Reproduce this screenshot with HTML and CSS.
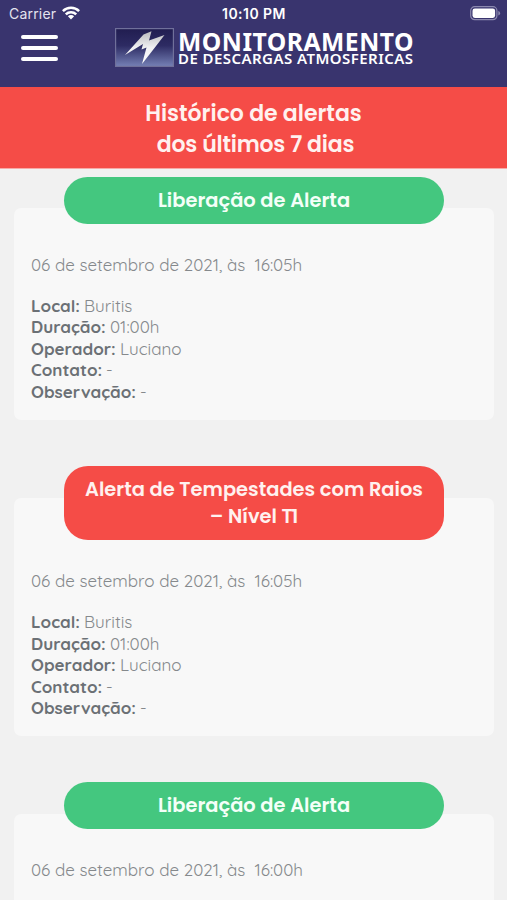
FILE: index.html
```
<!DOCTYPE html>
<html lang="pt-BR">
<head>
<meta charset="utf-8">
<meta name="viewport" content="width=device-width">
<title>Monitoramento de Descargas Atmosféricas</title>
<link rel="stylesheet" href="styles.css">
</head>
<body>
<header class="header">
  <div class="status">
    <div class="carrier"><span>Carrier</span>
      <svg class="wifi" viewBox="0 0 18 14" width="18" height="14"><g fill="none" stroke="#fff" stroke-width="2.5"><path d="M.9 5.1a11.5 11.5 0 0 1 16.2 0"/><path d="M3.8 8.3a7.4 7.4 0 0 1 10.4 0"/></g><path d="M5.9 10.3a4.4 4.4 0 0 1 6.2 0L9 13.6z" fill="#fff"/></svg>
    </div>
    <time class="clock">10:10 PM</time>
    <svg class="battery" viewBox="0 0 31 15" width="31" height="15"><rect x=".7" y=".7" width="26.2" height="13" rx="4" fill="none" stroke="#8c89af" stroke-width="1.2"/><rect x="2.5" y="2.5" width="22.6" height="9.4" rx="2.3" fill="#fff"/><path d="M28.3 5v4.5q1.8-.6 1.8-2.25T28.3 5z" fill="#8c89af"/></svg>
  </div>
  <div class="bar">
    <button class="menu" aria-label="Menu"><i></i><i></i><i></i></button>
    <div class="brand">
      <svg class="logo" viewBox="0 0 59 39" width="59" height="39">
        <defs>
          <linearGradient id="sky" x2="0" y2="1"><stop stop-color="#211d50"/><stop offset=".45" stop-color="#2d2b63"/><stop offset="1" stop-color="#7580b5"/></linearGradient>
          <linearGradient id="bolt" x2="0" y2="1"><stop stop-color="#b9b9bd"/><stop offset=".5" stop-color="#f0f0f2"/><stop offset="1" stop-color="#fff"/></linearGradient>
        </defs>
        <rect x=".6" y=".6" width="57.8" height="37.8" fill="url(#sky)" stroke="#70709a" stroke-width="1.2"/>
        <path d="M10 27L28.5 6.5 36.5 3.2 34 12.5 49.5 7 39.5 20 27 36 31.5 19.5 26.5 21.5 28 16z" fill="url(#bolt)"/>
      </svg>
      <div class="name"><span class="name-top">MONITORAMENTO</span><span class="name-sub">DE DESCARGAS ATMOSFERICAS</span></div>
    </div>
  </div>
</header>
<h1 class="title"><span class="t1">Histórico de alertas</span><br><span class="t2">dos últimos 7 dias</span></h1>
<main class="list">
  <article class="card">
    <h2 class="pill"><span class="p1">Liberação de Alerta</span></h2>
    <p class="date">06 de setembro de 2021, às&nbsp; 16:05h</p>
    <dl class="info">
      <div><dt class="local">Local:</dt><dd>Buritis</dd></div>
      <div><dt class="dur">Duração:</dt><dd>01:00h</dd></div>
      <div><dt class="oper">Operador:</dt><dd>Luciano</dd></div>
      <div><dt class="cont">Contato:</dt><dd>-</dd></div>
      <div><dt class="obs">Observação:</dt><dd>-</dd></div>
    </dl>
  </article>
  <article class="card">
    <h2 class="pill danger"><span class="p2">Alerta de Tempestades com Raios</span><br><span class="p3">– Nível <span class="level">T</span>1</span></h2>
    <p class="date">06 de setembro de 2021, às&nbsp; 16:05h</p>
    <dl class="info">
      <div><dt class="local">Local:</dt><dd>Buritis</dd></div>
      <div><dt class="dur">Duração:</dt><dd>01:00h</dd></div>
      <div><dt class="oper">Operador:</dt><dd>Luciano</dd></div>
      <div><dt class="cont">Contato:</dt><dd>-</dd></div>
      <div><dt class="obs">Observação:</dt><dd>-</dd></div>
    </dl>
  </article>
  <article class="card">
    <h2 class="pill"><span class="p1">Liberação de Alerta</span></h2>
    <p class="date">06 de setembro de 2021, às&nbsp; 16:00h</p>
  </article>
</main>
</body>
</html>
```
FILE: styles.css
```
* { box-sizing: border-box; }
body { margin: 0; height: 900px; overflow: hidden; background: #f1f1f1; font-family: Quicksand, Lato, sans-serif; color: #85898c; }
h1, h2, p, dl, dd { margin: 0; }
svg { display: block; }

.header { height: 87px; background: #39346e; color: #fff; }
.status { display: grid; grid-template-columns: 1fr auto 1fr; height: 28px; padding: 0 6px 0 9px; align-items: center; font: 500 14px/28px Inter, sans-serif; }
.carrier { display: flex; gap: 6px; align-items: center; color: #e4e3ef; font-weight: 400; letter-spacing: .2px; }
.wifi { margin-top: -2px; }
.clock { margin-left: -2px; font-weight: 600; font-size: 14px; letter-spacing: .45px; }
.battery { justify-self: end; margin-top: -1px; }

.bar { display: flex; height: 39px; padding-left: 21px; }
.menu { display: flex; flex-direction: column; justify-content: space-between; width: 37px; height: 26px; margin: 7px 0 0; padding: 0; border: 0; background: none; }
.menu i { height: 4px; border-radius: 2px; background: #fff; }
.brand { display: flex; gap: 4px; margin-left: 57px; }
.name { display: flex; flex-direction: column; font-family: "Noto Sans", sans-serif; font-weight: 700; white-space: nowrap; }
.name-top { margin-top: 3px; font-size: 24.7px; line-height: 22px; font-weight: 700; letter-spacing: .5px; }
.name-sub { font-size: 15px; line-height: 11px; font-weight: 600; letter-spacing: .44px; }

.title { height: 82px; padding-top: 11px; background: #f54c47; border-bottom: 1px solid #f7aaa7; color: #fff1ef; text-align: center; font: 600 22px/31px Poppins, Inter, sans-serif; }
.t2 { padding-left: 4px; letter-spacing: -.2px; }

.list { padding: 39px 13px 0 14px; }
.card { height: 211.5px; padding: 0 17px; margin-bottom: 78px; background: #f8f8f8; border-radius: 7px; display: flow-root; }
.card:has(.danger) { height: 238px; }
.pill { width: 380px; margin: -31.5px auto 30px 33px; padding: 10px 0; border-radius: 24px; background: #44c77f; color: #f4fff8; text-align: center; font: 600 19.45px/27px Poppins, Inter, sans-serif; }
.pill.danger { background: #f54c47; color: #fff1ef; }
.level { letter-spacing: -1.6px; }
.date, .info { font-size: 17px; line-height: 21.6px; white-space: nowrap; }
.date { margin-bottom: 19.5px; }
.info div { display: flex; gap: 5px; }
.info dt { font-weight: 700; color: #6b7075; }
.info .local { width: 48px; }
.info .dur { width: 74px; }
.info .oper { width: 84px; }
.info .cont { width: 70px; }
.info .obs { width: 104px; }
```
